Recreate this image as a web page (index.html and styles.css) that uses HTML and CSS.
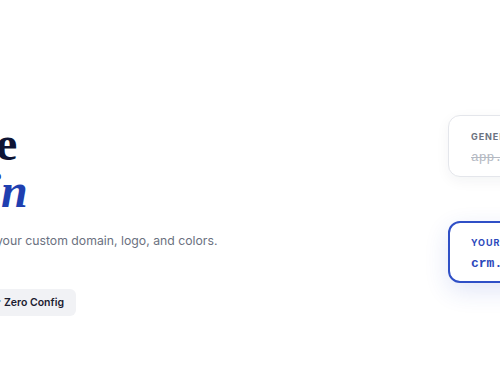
FILE: index.html
```html
<!DOCTYPE html>
<html lang="en">
<head>
<meta charset="utf-8">
<title>Custom domain</title>
<link rel="stylesheet" href="styles.css">
</head>
<body>
<main class="hero">
  <section class="copy">
    <h1 class="title">
      <span class="line line-1">Your brand, your site</span>
      <em class="line line-2">on your domain</em>
    </h1>
    <p class="lede">White-label every page with your custom domain, logo, and colors.</p>
    <ul class="badges">
      <li class="badge">✓ Custom Domain</li>
      <li class="badge">✓ Free SSL</li>
      <li class="badge">✓ Zero Config</li>
    </ul>
  </section>
  <aside class="cards">
    <div class="card card-generic">
      <div class="card-label">Generic URL</div>
      <div class="card-url">app.vendor.com/acme</div>
    </div>
    <div class="card card-custom">
      <div class="card-label">Your custom domain</div>
      <div class="card-url">crm.acme.com</div>
    </div>
  </aside>
</main>
</body>
</html>
```
FILE: styles.css
```css
* { box-sizing: border-box; }
html, body {
  margin: 0;
  padding: 0;
  background: #ffffff;
}
body {
  width: 500px;
  height: 383px;
  overflow: hidden;
  font-family: Inter, "Noto Sans", sans-serif;
}
.hero {
  display: grid;
  grid-template-columns: 680px 230px;
  column-gap: 196px;
  margin-left: -428px;
  width: 1106px;
  padding-top: 115px;
  align-items: start;
}
.copy {
  margin-top: 5px;
  padding-left: 7px;
}
.title {
  margin: 0;
  font-family: "Liberation Serif", "DejaVu Serif", serif;
  font-weight: 700;
  font-size: 48px;
  line-height: 47px;
  color: #0e1434;
}
.line { display: block; white-space: nowrap; }
.line-2 {
  font-style: italic;
  color: #1f3fb0;
  margin-left: 134px;
}
.lede {
  margin: 17px 0 0 251px;
  font-size: 12.25px;
  line-height: 20px;
  color: #6b7180;
  white-space: nowrap;
}
.badges {
  list-style: none;
  margin: 38px 0 0 184px;
  padding: 0;
  display: flex;
  gap: 10px;
}
.badge {
  background: #f1f2f5;
  border-radius: 6px;
  padding: 0 12px;
  height: 27px;
  display: flex;
  align-items: center;
  font-size: 10.5px;
  font-weight: 600;
  color: #1c2030;
  white-space: nowrap;
}
.cards {
  display: flex;
  flex-direction: column;
  gap: 44px;
}
.card {
  height: 62px;
  border-radius: 12px;
  background: #ffffff;
  padding: 14px 22px 0;
  white-space: nowrap;
}
.card-generic {
  border: 1.5px solid #e4e6eb;
  box-shadow: 0 4px 14px rgba(20, 30, 60, 0.05);
}
.card-custom {
  border: 2px solid #2f4fc6;
  padding-left: 21px;
  padding-top: 13px;
  box-shadow: 0 8px 24px rgba(40, 70, 200, 0.14);
}
.card-label {
  font-size: 9px;
  font-weight: 700;
  letter-spacing: 0.9px;
  text-transform: uppercase;
  line-height: 14px;
  color: #6b7280;
}
.card-url {
  margin-top: 5px;
  font-family: "Liberation Mono", "DejaVu Sans Mono", monospace;
  font-size: 13px;
  line-height: 18px;
}
.card-generic .card-url {
  color: #b4b9c2;
  text-decoration: line-through;
}
.card-custom .card-label { color: #2b48bb; }
.card-custom .card-url {
  color: #2b48bb;
  font-weight: 700;
}
```
